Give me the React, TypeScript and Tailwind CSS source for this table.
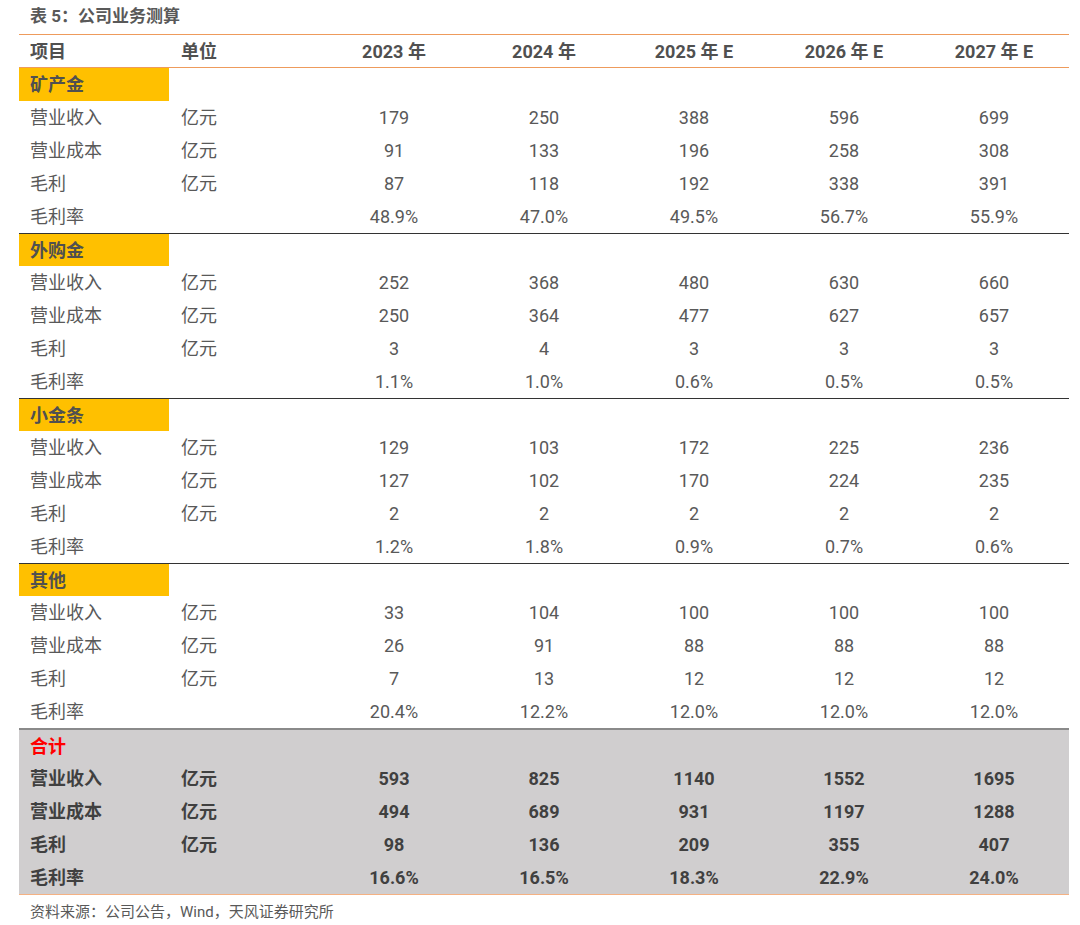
import React from "react";

type Row = { name: string; unit: string; vals: string[] };
type Section = { title: string; rows: Row[] };

const mk = (a: string[], b: string[], c: string[], d: string[]): Row[] => [
  { name: "营业收入", unit: "亿元", vals: a },
  { name: "营业成本", unit: "亿元", vals: b },
  { name: "毛利", unit: "亿元", vals: c },
  { name: "毛利率", unit: "", vals: d },
];

const sections: Section[] = [
  {
    title: "矿产金",
    rows: mk(
      ["179", "250", "388", "596", "699"],
      ["91", "133", "196", "258", "308"],
      ["87", "118", "192", "338", "391"],
      ["48.9%", "47.0%", "49.5%", "56.7%", "55.9%"]
    ),
  },
  {
    title: "外购金",
    rows: mk(
      ["252", "368", "480", "630", "660"],
      ["250", "364", "477", "627", "657"],
      ["3", "4", "3", "3", "3"],
      ["1.1%", "1.0%", "0.6%", "0.5%", "0.5%"]
    ),
  },
  {
    title: "小金条",
    rows: mk(
      ["129", "103", "172", "225", "236"],
      ["127", "102", "170", "224", "235"],
      ["2", "2", "2", "2", "2"],
      ["1.2%", "1.8%", "0.9%", "0.7%", "0.6%"]
    ),
  },
  {
    title: "其他",
    rows: mk(
      ["33", "104", "100", "100", "100"],
      ["26", "91", "88", "88", "88"],
      ["7", "13", "12", "12", "12"],
      ["20.4%", "12.2%", "12.0%", "12.0%", "12.0%"]
    ),
  },
];

const total = mk(
  ["593", "825", "1140", "1552", "1695"],
  ["494", "689", "931", "1197", "1288"],
  ["98", "136", "209", "355", "407"],
  ["16.6%", "16.5%", "18.3%", "22.9%", "24.0%"]
);

const font = { fontFamily: 'Roboto, "Liberation Sans", "Noto Sans CJK SC", sans-serif' };

function DataRow({ r, bold }: { r: Row; bold?: boolean }) {
  return (
    <div className={`grid grid-cols-7 h-[33px] items-center text-[18px] ${bold ? "font-bold text-[#404040]" : "text-[#595959]"}`}>
      <div className="pl-[11px]">{r.name}</div>
      <div className="pl-[12px]">{r.unit}</div>
      {r.vals.map((v, i) => (
        <div key={i} className="text-center">{v}</div>
      ))}
    </div>
  );
}

export default function App() {
  return (
    <div className="w-[1080px] h-[925px] bg-white" style={font}>
      <div className="pl-[30px] pt-[4px] h-[34px] text-[17px] font-bold text-[#595959]">表 5：公司业务测算</div>
      <div className="ml-[19px] w-[1050px]">
        <div className="grid grid-cols-7 h-[34px] items-center border-t border-b border-[#ee9b5c] text-[18px] font-bold text-[#505050]">
          <div className="pl-[11px]">项目</div>
          <div className="pl-[12px]">单位</div>
          <div className="text-center">2023 年</div>
          <div className="text-center">2024 年</div>
          <div className="text-center">2025 年 E</div>
          <div className="text-center">2026 年 E</div>
          <div className="text-center">2027 年 E</div>
        </div>
        {sections.map((s, si) => (
          <div key={si} className={si > 0 ? "border-t border-[#333333]" : ""}>
            <div className={`grid grid-cols-7 items-center text-[18px] font-bold text-[#505050] ${si > 0 ? "h-[32px]" : "h-[33px]"}`}>
              <div className="bg-[#ffc000] h-full flex items-center pl-[11px]">{s.title}</div>
            </div>
            {s.rows.map((r, ri) => (
              <DataRow key={ri} r={r} />
            ))}
          </div>
        ))}
        <div className="border-t-2 border-[#8a8a8a] border-b border-b-[#f4b183] bg-[#d0cecf]">
          <div className="h-[32px] flex items-center pl-[11px] text-[18px] font-bold text-[#ff0000]">合计</div>
          {total.map((r, ri) => (
            <DataRow key={ri} r={r} bold />
          ))}
        </div>
      </div>
      <div className="pl-[30px] pt-[6px] text-[15px] text-[#595959]">资料来源：公司公告，Wind，天风证券研究所</div>
    </div>
  );
}
